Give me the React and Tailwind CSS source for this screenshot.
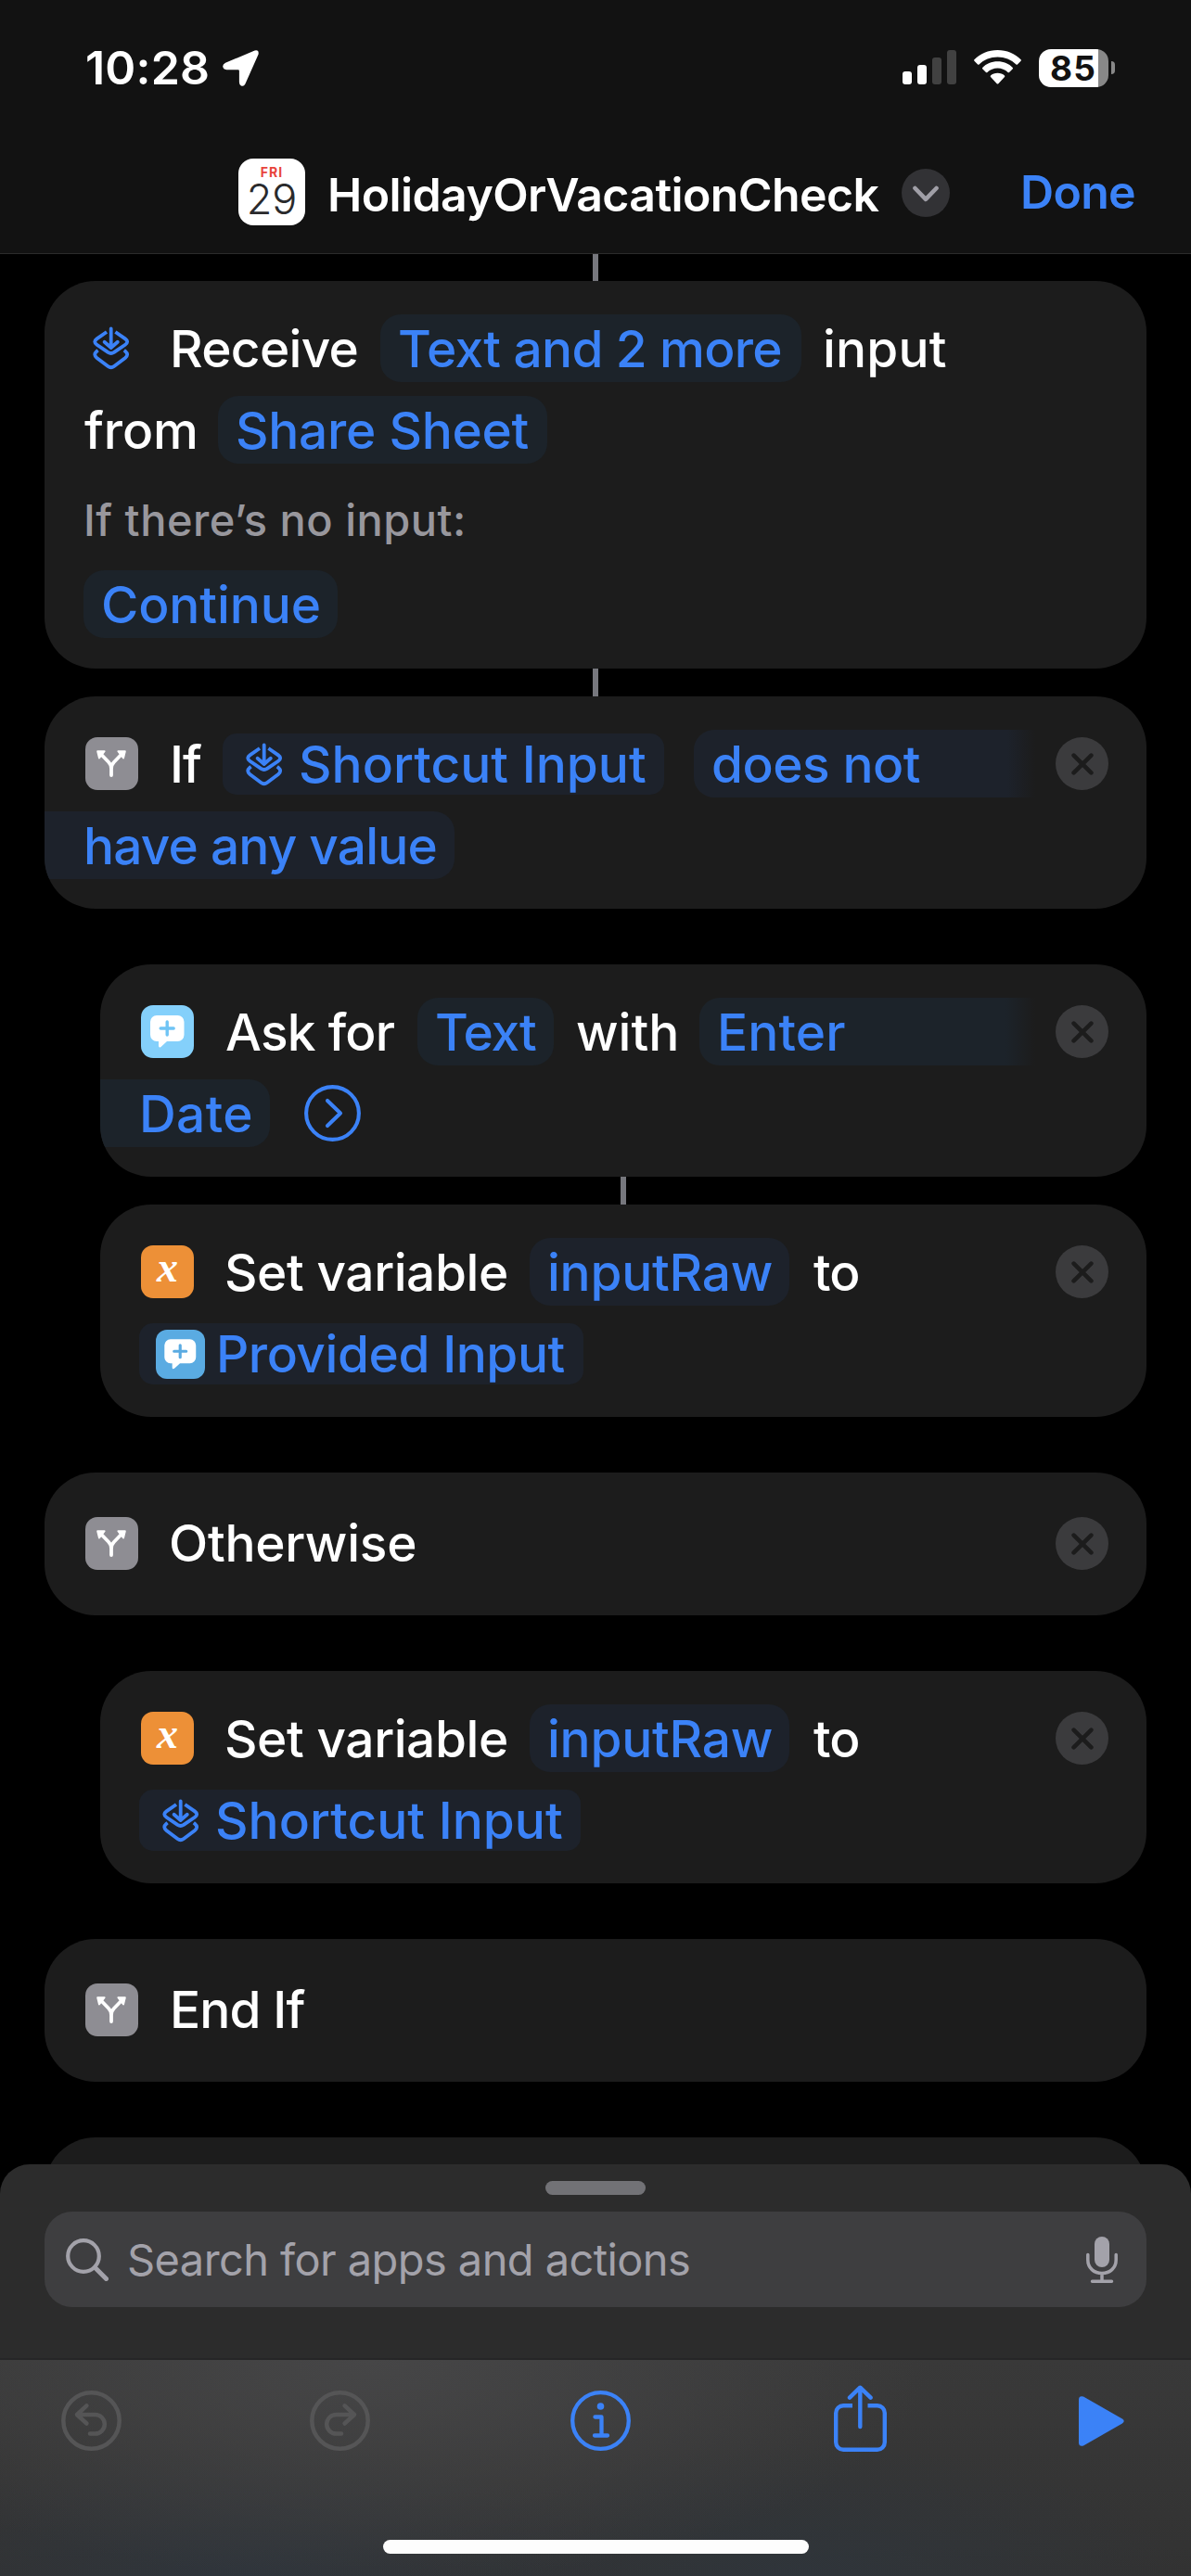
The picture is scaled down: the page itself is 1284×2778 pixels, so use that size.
import React from "react";

function ShortcutGlyph() {
  return (
    <svg className="h-[47px] w-10 shrink-0" viewBox="0 0 40 47" fill="none" stroke="#3b82f7" strokeWidth="3.8" strokeLinecap="round" strokeLinejoin="round">
      <path strokeLinecap="butt" d="M15 6 L4.4 13.4 Q0 16.6 4.4 19.7 L16.4 27.9 Q19.7 30 23 27.9 L35 19.7 Q39.4 16.6 35 13.4 L24.4 6" />
      <path strokeLinecap="butt" d="M5.6 25.8 L4.4 26.7 Q0 30.4 4.4 33.9 L16.4 43 Q19.7 45.4 23 43 L35 33.9 Q39.4 30.4 35 26.7 L33.8 25.8" />
      <path d="M19.7 2.4V22.4M12.6 16.8L19.7 23L26.8 16.8" />
    </svg>
  );
}

function BranchIcon() {
  return (
    <div className="ml-[44px] size-[57px] shrink-0 rounded-[13px] bg-[#8e8d93]">
      <svg className="size-[57px]" viewBox="0 0 57 57" fill="none" stroke="#fff" strokeWidth="3.8" strokeLinecap="round" strokeLinejoin="round">
        <path d="M18 19.5L25 26.7Q28 29.8 28 34V41M38 19.5L31 26.7Q28 29.8 28 34" />
        <path d="M13.2 15.2H20.6L15 22.4ZM42.8 15.2H35.4L41 22.4Z" fill="#fff" strokeWidth="2" />
      </svg>
    </div>
  );
}

function BubbleGlyph({ plus }) {
  return (
    <svg className="size-full" viewBox="0 0 57 57" fill="none">
      <path d="M17 11H39.500a7 7 0 0 1 7 7V32a7 7 0 0 1-7 7H28L21.500 45Q19 46.500 19 43.500V39H17a7 7 0 0 1-7-7V18a7 7 0 0 1 7-7Z" fill="#fff" />
      <path d="M28.200 18V32M21.200 25H35.200" stroke={plus} strokeWidth="3.400" strokeLinecap="round" />
    </svg>
  );
}

function VariableIcon() {
  return (
    <div className="ml-[44px] flex size-[57px] shrink-0 items-center justify-center rounded-[13px] bg-[#ed9037]">
      <span className="-mt-[9px] font-['Liberation_Serif',serif] text-[46px] leading-none font-bold text-white italic">x</span>
    </div>
  );
}

function CloseButton() {
  return (
    <div className="mr-[41px] ml-auto flex size-[57px] shrink-0 items-center justify-center rounded-full bg-[#3b3b3d]">
      <svg className="size-[24px]" viewBox="0 0 24 24" stroke="#1c1c1c" strokeWidth="4.6" strokeLinecap="round">
        <path d="M2.600 2.600L21.400 21.400M21.400 2.600L2.600 21.400" />
      </svg>
    </div>
  );
}

const Text = ({ className = "", children }) => (
  <span className={`mt-[2px] shrink-0 whitespace-pre text-white ${className}`}>{children}</span>
);

const Pill = ({ className = "", children }) => (
  <span className={`block h-[73px] shrink-0 rounded-[22px] pl-[19px] whitespace-pre text-[#3b82f7] ${className}`}>{children}</span>
);

const TokenPill = ({ className = "", children }) => (
  <span className={`flex h-[66px] shrink-0 items-center rounded-[15px] bg-[#1d222b] pt-[1px] whitespace-pre text-[#3b82f7] ${className}`}>{children}</span>
);

const Row = ({ children }) => <div className="flex h-[73px] items-center leading-[75px]">{children}</div>;

const Card = ({ className = "", children }) => (
  <section className={`flex flex-col gap-[15px] overflow-hidden rounded-[55px] bg-[#1c1c1c] text-[55px] font-medium ${className}`}>{children}</section>
);

const Connector = ({ className = "" }) => <div className={`h-[30px] w-[6px] bg-[#76777d] ${className}`} />;

function StatusBar() {
  return (
    <div className="flex h-[146px] items-center">
      <span className="ml-[92px] w-[148px] text-[50px] leading-none font-semibold tracking-[0.19px]">10:28</span>
      <svg className="size-[39px]" viewBox="0 0 39 39" fill="#fff">
        <path d="M34.600 0.600Q39.300-0.600 38.600 4.400L24.400 36.600Q22.600 40 19.600 38.300Q17.900 37 17.900 34.600V22.400Q17.900 21.300 16.800 21.300H4.300Q0.600 21 0.200 17.600Q0.200 15 3 13.700Z" />
      </svg>
      <div className="mt-[-2px] ml-auto flex h-[37px] w-[58px] items-end gap-[6px]">
        <div className="h-[14px] w-[10px] rounded-[3px] bg-white" />
        <div className="h-[21px] w-[10px] rounded-[3px] bg-white" />
        <div className="h-[29px] w-[10px] rounded-[3px] bg-[#414141]" />
        <div className="h-[37px] w-[10px] rounded-[3px] bg-[#414141]" />
      </div>
      <svg className="mt-[-2px] ml-[19px] h-[37px] w-[51px]" viewBox="0 0 51 37" fill="#fff">
        <path d="M25.500 0C35.500 0 44.300 3.800 50.600 10.300Q51.200 11 50.600 11.700L46.900 15.400Q46.200 16 45.500 15.400C40.200 10.300 33.200 7.400 25.500 7.400S10.800 10.300 5.500 15.400Q4.800 16 4.100 15.400L0.400 11.700Q-0.200 11 0.400 10.300C6.700 3.800 15.500 0 25.500 0Z" />
        <path d="M25.500 12.300C32 12.300 37.700 14.800 41.800 18.900Q42.400 19.600 41.800 20.300L38 24Q37.300 24.600 36.600 24C33.600 21.200 29.700 19.600 25.500 19.600S17.400 21.200 14.400 24Q13.700 24.600 13 24L9.200 20.300Q8.600 19.600 9.200 18.900C13.300 14.800 19 12.300 25.500 12.300Z" />
        <path d="M25.500 24.700C28.500 24.700 31.200 25.700 33 27.500Q33.700 28.300 33 29L26.300 36.200Q25.500 37 24.700 36.200L18 29Q17.300 28.300 18 27.500C19.800 25.700 22.500 24.700 25.500 24.700Z" />
      </svg>
      <div className="ml-[19px] flex h-[41px] w-[75px] items-center rounded-[13px] bg-[linear-gradient(to_right,#fff_64px,#888_64px)]">
        <span className="ml-[12px] text-[37px] leading-none font-bold tracking-[1.2px] text-[#121212]">85</span>
      </div>
      <div className="mr-[82px] ml-[3px] h-[14px] w-[4px] rounded-r-full bg-[#888]" />
    </div>
  );
}

function TitleBar() {
  return (
    <div className="flex h-[127px] items-center">
      <div className="-mt-[6px] ml-[257px] flex size-[72px] flex-col items-center rounded-[16px] bg-white">
        <span className="mt-[6px] text-[14px] leading-[17px] font-bold tracking-[1.100px] text-[#e8453c]">FRI</span>
        <span className="-mt-[1px] text-[45px] leading-[44px] font-light text-[#2a2a2c]">29</span>
      </div>
      <span className="ml-[24px] w-[619px] text-[50px] leading-none font-semibold tracking-[-0.600px]">HolidayOrVacationCheck</span>
      <div className="-mt-[4px] flex size-[52px] items-center justify-center rounded-full bg-[#323235]">
        <svg className="mt-[3px] h-[18px] w-[28px]" viewBox="0 0 28 18" fill="none" stroke="#a09fa7" strokeWidth="4.600" strokeLinecap="round" strokeLinejoin="round">
          <path d="M2.500 3L14 14.800L25.500 3" />
        </svg>
      </div>
      <span className="-mt-[6px] ml-[76px] text-[50px] leading-none font-semibold tracking-[-0.700px] text-[#3b82f7]">Done</span>
    </div>
  );
}

function SetVariable({ children }) {
  return (
    <Card className="ml-[60px] h-[229px] pt-[36px]">
      <Row>
        <VariableIcon />
        <Text className="ml-[33px] w-[329px] tracking-[-0.430px]">Set variable</Text>
        <Pill className="w-[280px] bg-[#1d222b] tracking-[-0.240px]">inputRaw</Pill>
        <Text className="ml-[26px] tracking-[-1px]">to</Text>
        <CloseButton />
      </Row>
      <Row>{children}</Row>
    </Card>
  );
}

function Toolbar() {
  return (
    <nav className="flex h-[235px] flex-col border-t-2 border-[#262627] bg-[radial-gradient(ellipse_600px_240px_at_400px_0px,#464647,transparent),radial-gradient(ellipse_420px_150px_at_260px_240px,#2f353c,transparent),radial-gradient(ellipse_420px_150px_at_860px_240px,#2f353b,transparent),linear-gradient(#393939,#323232)]">
      <div className="flex h-[131px] items-center">
        <svg className="ml-[66px] size-[65px]" viewBox="0 0 65 65" fill="none" stroke="#555556" strokeWidth="4.500" strokeLinecap="round" strokeLinejoin="round">
          <circle cx="32.500" cy="32.500" r="30.200" />
          <path d="M27.400 16.300L17 26L27.400 35.500M17 26H36.500a10.300 10.300 0 0 1 0 20.600H31" />
        </svg>
        <svg className="ml-[203px] size-[65px]" viewBox="0 0 65 65" fill="none" stroke="#555556" strokeWidth="4.500" strokeLinecap="round" strokeLinejoin="round">
          <circle cx="32.500" cy="32.500" r="30.200" />
          <path d="M37.600 16.300L48 26L37.600 35.500M48 26H28.500a10.300 10.300 0 0 0 0 20.600H34" />
        </svg>
        <svg className="ml-[216px] size-[65px]" viewBox="0 0 65 65" fill="none" stroke="#3b82f7" strokeWidth="4.300" strokeLinecap="round" strokeLinejoin="round">
          <circle cx="32.500" cy="32.500" r="30.300" />
          <path d="M26.500 28.500H33.500V48.500M26 48.500H40" />
          <circle cx="32.500" cy="17" r="3.800" fill="#3b82f7" stroke="none" />
        </svg>
        <svg className="-mt-[5px] ml-[219px] h-[72px] w-[57px]" viewBox="0 0 57 72" fill="none" stroke="#3b82f7" strokeWidth="4.400" strokeLinecap="round" strokeLinejoin="round">
          <path strokeLinecap="butt" d="M20 22.200H10.200a8 8 0 0 0-8 8V61.800a8 8 0 0 0 8 8H46.800a8 8 0 0 0 8-8V30.200a8 8 0 0 0-8-8H36.500" />
          <path d="M28.300 3V45M17 13.700L28.300 2.700L39.600 13.700" />
        </svg>
        <svg className="ml-[207px] h-[54px] w-[49px]" viewBox="0 0 49 54" fill="#3b82f7">
          <path d="M0 3.500Q0.500-1 5 0.600L46.500 24.300Q51 27 46.500 29.700L5 53.400Q0.500 55 0 50.500Z" />
        </svg>
      </div>
      <div className="mx-auto mt-[63px] h-[15px] w-[459px] rounded-full bg-[#fdfdfd]" />
    </nav>
  );
}

export default function App() {
  return (
    <div className="flex h-[2778px] w-[1284px] flex-col overflow-hidden bg-black font-['Inter',sans-serif] text-white">
      <header className="h-[274px] shrink-0 border-b border-[#2b2b2b] bg-[#121212]">
        <StatusBar />
        <TitleBar />
      </header>

      <main className="h-[2060px] shrink-0 overflow-hidden px-[48px]">
        <Connector className="ml-[591px] !h-[29px]" />

        <Card className="h-[418px] pt-[36px]">
          <Row>
            <span className="ml-[52px] flex"><ShortcutGlyph /></span>
            <Text className="ml-[43px] w-[227px] tracking-[-0.680px]">Receive</Text>
            <Pill className="w-[454px] bg-[#1c232a] tracking-[-0.660px]">Text and 2 more</Pill>
            <Text className="ml-[23px] tracking-[0.200px]">input</Text>
          </Row>
          <Row>
            <Text className="ml-[43px] w-[144px] tracking-[-0.100px]">from</Text>
            <Pill className="w-[355px] bg-[#1c232a] tracking-[-0.270px]">Share Sheet</Pill>
          </Row>
          <div className="-my-[15px] ml-[42px] h-[115px] text-[47px] leading-[122px] tracking-[0.480px] text-[#98979d]">If there’s no input:</div>
          <Row>
            <Pill className="ml-[42px] w-[274px] bg-[#1c232a] tracking-[-0.100px]">Continue</Pill>
          </Row>
        </Card>

        <Connector className="ml-[591px]" />

        <Card className="h-[229px] pt-[36px]">
          <Row>
            <BranchIcon />
            <Text className="ml-[34px] w-[57px] tracking-[-1px]">If</Text>
            <TokenPill className="w-[476px] gap-[17px] pl-[25px] tracking-[0.030px]">
              <ShortcutGlyph />
              Shortcut Input
            </TokenPill>
            <Pill className="ml-[32px] w-[368px] rounded-r-none bg-[linear-gradient(to_right,#1d222b_338px,#1c1c1c_368px)] tracking-[-0.480px]">does not</Pill>
            <CloseButton />
          </Row>
          <Row>
            <Pill className="w-[442px] rounded-l-none bg-[#1d222b] !pl-[42px] tracking-[-0.820px]">have any value</Pill>
          </Row>
        </Card>

        <Card className="mt-[60px] ml-[60px] h-[229px] pt-[36px]">
          <Row>
            <div className="ml-[44px] size-[57px] shrink-0 rounded-[13px] bg-[#84d0fb]">
              <BubbleGlyph plus="#6fc4f5" />
            </div>
            <Text className="ml-[34px] w-[207px] tracking-[-0.770px]">Ask for</Text>
            <Pill className="w-[147px] bg-[#1c232a] tracking-[-1.100px]">Text</Pill>
            <Text className="ml-[24px] w-[133px] tracking-[0px]">with</Text>
            <Pill className="w-[362px] rounded-r-none bg-[linear-gradient(to_right,#1c232a_330px,#1c1c1c_362px)] tracking-[0.100px]">Enter</Pill>
            <CloseButton />
          </Row>
          <Row>
            <Pill className="w-[183px] rounded-l-none bg-[#1c232a] !pl-[42px] tracking-[0.400px]">Date</Pill>
            <svg className="ml-[37px] size-[61px]" viewBox="0 0 61 61" fill="none" stroke="#3b82f7" strokeWidth="4.100" strokeLinecap="round" strokeLinejoin="round">
              <circle cx="30.500" cy="30.500" r="28.400" />
              <path d="M25 17L39 30.500L25 44" />
            </svg>
          </Row>
        </Card>

        <Connector className="ml-[621px]" />

        <SetVariable>
          <TokenPill className="ml-[42px] w-[479px] gap-[12px] pl-[18px] tracking-[-0.440px]">
            <span className="block size-[53px] rounded-[12px] bg-[#5aabe2]">
              <BubbleGlyph plus="#5aabe2" />
            </span>
            Provided Input
          </TokenPill>
        </SetVariable>

        <Card className="mt-[60px] h-[154px] pt-[40px]">
          <Row>
            <BranchIcon />
            <Text className="ml-[33px] !mt-0 tracking-[-0.250px]">Otherwise</Text>
            <CloseButton />
          </Row>
        </Card>

        <div className="h-[60px]" />

        <SetVariable>
          <TokenPill className="ml-[42px] w-[476px] gap-[17px] pl-[25px] tracking-[0.030px]">
            <ShortcutGlyph />
            Shortcut Input
          </TokenPill>
        </SetVariable>

        <Card className="mt-[60px] h-[154px] pt-[40px]">
          <Row>
            <BranchIcon />
            <Text className="ml-[34px] !mt-0 tracking-[-0.900px]">End If</Text>
          </Row>
        </Card>

        <Card className="mt-[60px] h-[154px]" />
      </main>

      <section className="h-[209px] shrink-0 rounded-t-[32px] bg-[#2c2c2c] px-[48px] pt-[18px]">
        <div className="mx-auto h-[15px] w-[108px] rounded-full bg-[#727276]" />
        <div className="mt-[18px] flex h-[103px] items-center rounded-[30px] bg-[#3e3e40] text-[#a3a2aa]">
          <svg className="ml-[23px] size-[46px]" viewBox="0 0 46 46" fill="none" stroke="#a3a2aa" strokeWidth="4.200" strokeLinecap="round">
            <circle cx="19" cy="19" r="16.800" />
            <path d="M31.500 31.500L43.500 43.500" strokeWidth="5" />
          </svg>
          <span className="ml-[20px] text-[47px] leading-none tracking-[-0.590px] whitespace-nowrap">Search for apps and actions</span>
          <svg className="mr-[31px] ml-auto h-[50px] w-[34px]" viewBox="0 0 34 50" fill="none" stroke="#a3a2aa" strokeWidth="3.500" strokeLinecap="round">
            <rect x="9" y="0" width="16" height="33" rx="8" fill="#a3a2aa" stroke="none" />
            <path d="M1.800 19.500V25C1.800 34 8.500 39.500 17 39.500S32.200 34 32.200 25V19.500M17 39.500V48M6.500 48.200H27.500" />
          </svg>
        </div>
      </section>

      <Toolbar />
    </div>
  );
}
